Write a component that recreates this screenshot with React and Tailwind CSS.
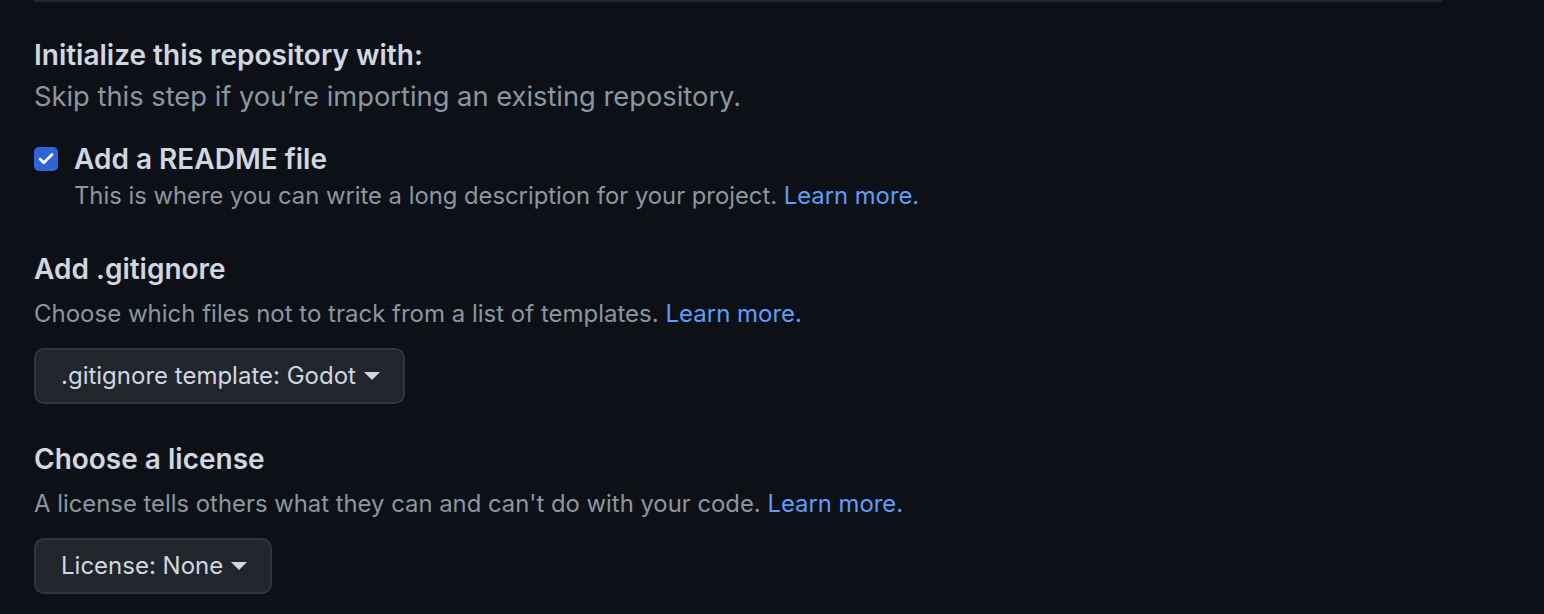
import { Check } from "lucide-react";

const Caret = () => (
  <svg width="16" height="8" viewBox="0 0 16 8" fill="currentColor" className="ml-[8px]">
    <path d="M0 0h16L8 8Z" />
  </svg>
);

const LearnMore = () => (
  <a href="#" className="text-[#5d9ef7]">
    Learn more.
  </a>
);

const SelectButton = ({ label }) => (
  <button
    type="button"
    className="flex items-center h-[56px] pl-[25px] pr-[23px] rounded-[10px] border-2 border-[#30363d] bg-[#21262d] text-[#d1d7e0] text-[24px]"
  >
    {label}
    <Caret />
  </button>
);

const App = () => {
  return (
    <div
      className="w-[1544px] h-[614px] bg-[#0d1117] overflow-hidden text-[#d1d7e0]"
      style={{ fontFamily: "Inter, 'Noto Sans', sans-serif" }}
    >
      <div className="ml-[34px] w-[1408px] h-[2px] bg-[#21262d]" />

      <div className="pl-[34px] pt-[36px]">
        <div className="text-[28px] font-semibold leading-[34px]">
          Initialize this repository with:
        </div>
        <div className="text-[27.3px] text-[#8d96a0] leading-[34px] mt-[8px]">
          Skip this step if you’re importing an existing repository.
        </div>

        <div className="flex items-start gap-[16px] mt-[26px]">
          <div className="mt-[7px] w-[24px] h-[24px] rounded-[5px] bg-[#2f65d8] flex items-center justify-center">
            <Check size={18} strokeWidth={3.5} className="text-white" />
          </div>
          <div>
            <div className="text-[28px] font-semibold leading-[38px]">Add a README file</div>
            <div className="text-[23.8px] text-[#8d96a0] leading-[36px]">
              This is where you can write a long description for your project. <LearnMore />
            </div>
          </div>
        </div>

        <div className="text-[28px] font-semibold leading-[38px] mt-[36px]">Add .gitignore</div>
        <div className="text-[24px] text-[#8d96a0] leading-[36px] mt-[8px]">
          Choose which files not to track from a list of templates. <LearnMore />
        </div>
        <div className="flex mt-[16px]">
          <SelectButton label=".gitignore template: Godot" />
        </div>

        <div className="text-[28px] font-semibold leading-[38px] mt-[36px]">Choose a license</div>
        <div className="text-[23.85px] text-[#8d96a0] leading-[36px] mt-[8px]">
          A license tells others what they can and can't do with your code. <LearnMore />
        </div>
        <div className="flex mt-[16px]">
          <SelectButton label="License: None" />
        </div>
      </div>
    </div>
  );
};

export default App;
